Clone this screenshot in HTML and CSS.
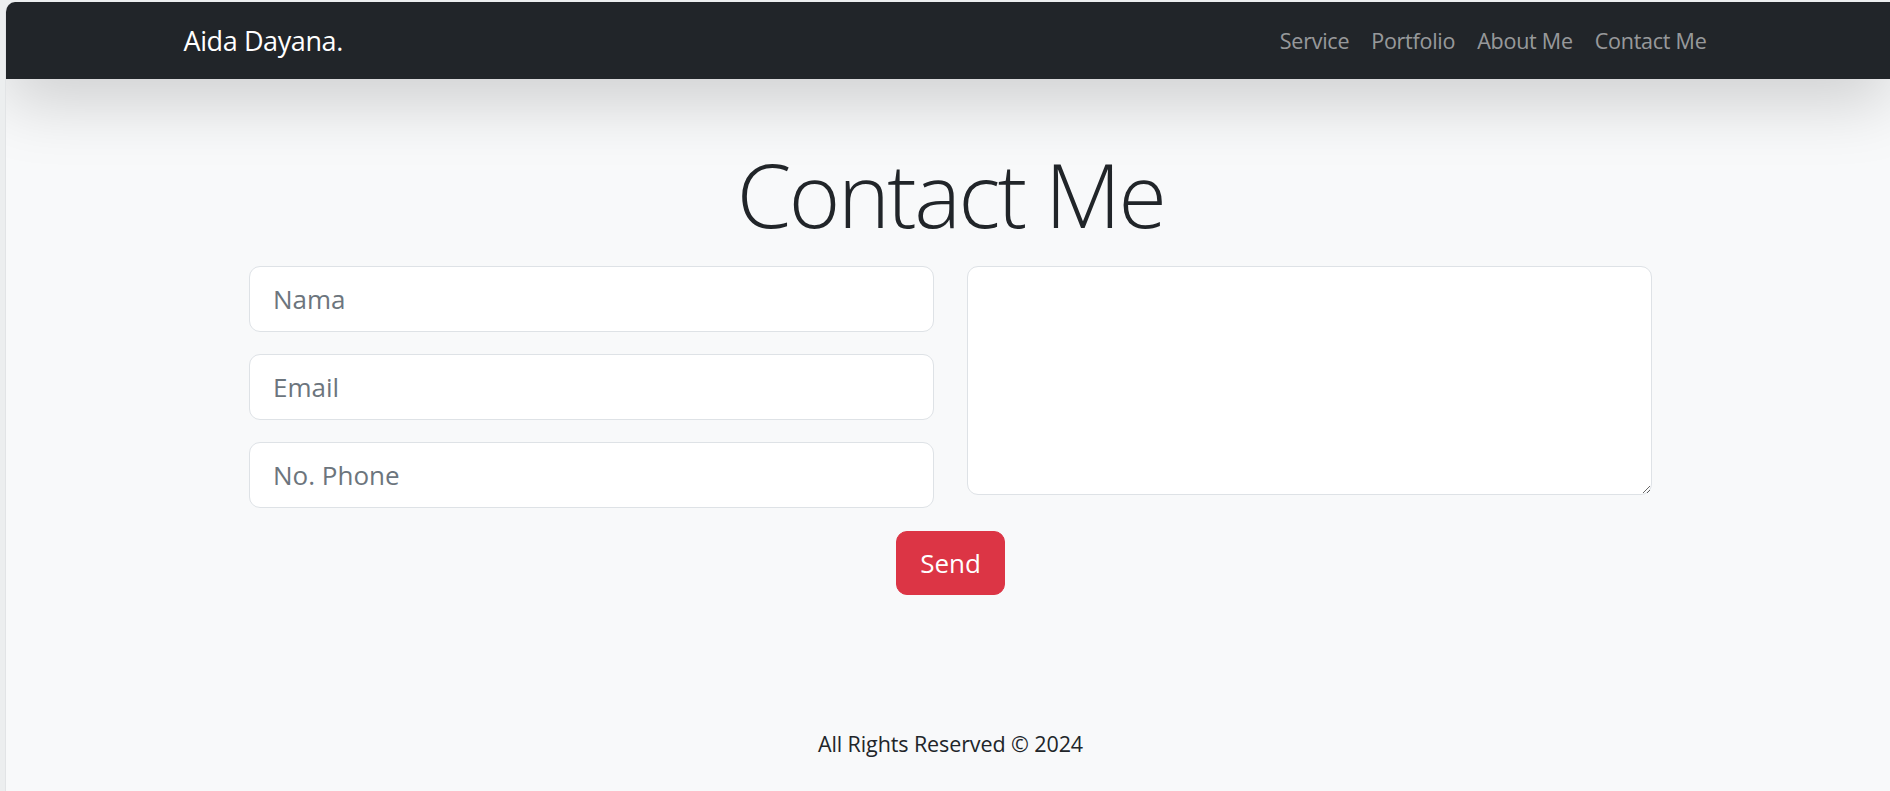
FILE: index.html
```html
<!DOCTYPE html>
<html lang="en">
<head>
<meta charset="utf-8">
<title>Aida Dayana - Contact Me</title>
<link rel="stylesheet" href="styles.css">
</head>
<body>
<div class="window">
  <nav class="navbar">
    <div class="nav-inner">
      <a class="brand" href="#">Aida Dayana.</a>
      <ul class="nav-links">
        <li><a href="#">Service</a></li>
        <li><a href="#">Portfolio</a></li>
        <li><a href="#">About Me</a></li>
        <li><a href="#">Contact Me</a></li>
      </ul>
    </div>
  </nav>
  <main class="contact">
    <h1 class="title">Contact Me</h1>
    <form class="form">
      <div class="fields">
        <input class="control" type="text" placeholder="Nama">
        <input class="control" type="email" placeholder="Email">
        <input class="control" type="text" placeholder="No. Phone">
      </div>
      <textarea class="control message"></textarea>
      <div class="actions">
        <button class="btn-send" type="button">Send</button>
      </div>
    </form>
  </main>
  <footer class="footer">All Rights Reserved &copy; 2024</footer>
</div>
</body>
</html>
```
FILE: styles.css
```css
* { box-sizing: border-box; }
html, body { margin: 0; padding: 0; }
body {
  background: #eceeef;
  font-family: "Open Sans", "Noto Sans", sans-serif;
  color: #212529;
}
.window {
  margin: 2px 0 0 5px;
  height: 789px;
  background: #f8f9fa;
  border-top-left-radius: 10px;
  overflow: hidden;
  border-left: 1px solid #e2e4e6;
}
.navbar {
  position: relative;
  z-index: 1;
  height: 77px;
  background: #212529;
  box-shadow: 0 22px 66px rgba(0, 0, 0, .175);
}
.nav-inner {
  max-width: 1535px;
  height: 100%;
  margin: 0 auto;
  display: flex;
  align-items: center;
  justify-content: space-between;
}
.brand {
  color: #fff;
  text-decoration: none;
  font-size: 27px;
  letter-spacing: -0.4px;
  padding-left: 3px;
}
.nav-links {
  list-style: none;
  display: flex;
  margin: 0;
  padding: 0;
}
.nav-links li:last-child a { padding-right: 9px; }
.nav-links a {
  display: block;
  padding: 0 11px;
  color: rgba(255, 255, 255, .55);
  text-decoration: none;
  font-size: 21.5px;
  letter-spacing: -0.25px;
}
.contact {
  display: flex;
  flex-direction: column;
  align-items: center;
  padding-left: 5px;
}
.title {
  margin: 63px 0 18px;
  font-size: 88px;
  font-weight: 300;
  line-height: 1.2;
  letter-spacing: -2.5px;
  color: #212529;
}
.form {
  width: 1403px;
  display: grid;
  grid-template-columns: 1fr 1fr;
  column-gap: 33px;
  align-items: start;
}
.fields {
  display: flex;
  flex-direction: column;
  gap: 22px;
}
.control {
  display: block;
  width: 100%;
  height: 66px;
  padding: 0 23px;
  font-family: inherit;
  font-size: 26px;
  color: #212529;
  background: #fff;
  border: 1px solid #dee2e6;
  border-radius: 11px;
  outline: none;
}
.control::placeholder { color: #6c757d; }
.message {
  height: 229px;
  resize: vertical;
}
.actions {
  grid-column: 1 / -1;
  display: flex;
  justify-content: center;
  margin-top: 23px;
}
.btn-send {
  height: 64px;
  padding: 0 23px;
  font-family: inherit;
  font-size: 26px;
  color: #fff;
  background: #dc3545;
  border: 1px solid #dc3545;
  border-radius: 11px;
}
.footer {
  margin-top: 134px;
  padding-left: 5px;
  text-align: center;
  font-size: 21.5px;
  letter-spacing: -0.1px;
  color: #212529;
}
```
